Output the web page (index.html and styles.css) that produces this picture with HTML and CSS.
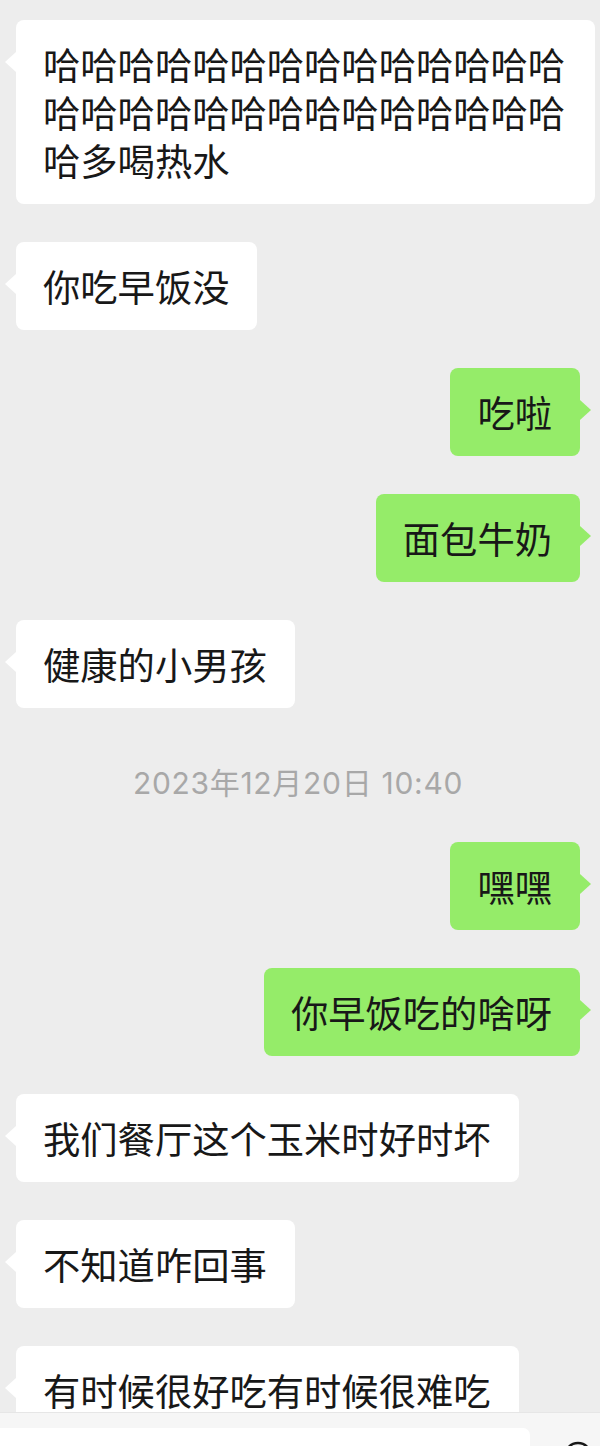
FILE: index.html
```html
<!DOCTYPE html>
<html lang="zh-CN">
<head>
  <meta charset="UTF-8">
  <meta name="viewport" content="width=device-width, initial-scale=1.0">
  <title>聊天</title>
  <link rel="stylesheet" href="styles.css">
</head>
<body>
  <div class="chat">
    <div class="row left"><div class="bubble">哈哈哈哈哈哈哈哈哈哈哈哈哈哈哈哈哈哈哈哈哈哈哈哈哈哈哈哈哈多喝热水</div></div>
    <div class="row left"><div class="bubble">你吃早饭没</div></div>
    <div class="row right"><div class="bubble">吃啦</div></div>
    <div class="row right"><div class="bubble">面包牛奶</div></div>
    <div class="row left"><div class="bubble">健康的小男孩</div></div>

    <!-- 时间 -->
    <div class="time">2023年12月20日 10:40</div>

    <div class="row right"><div class="bubble">嘿嘿</div></div>
    <div class="row right"><div class="bubble">你早饭吃的啥呀</div></div>
    <div class="row left"><div class="bubble">我们餐厅这个玉米时好时坏</div></div>
    <div class="row left"><div class="bubble">不知道咋回事</div></div>
    <div class="row left"><div class="bubble">有时候很好吃有时候很难吃</div></div>
  </div>

  <!-- 输入栏 -->
  <div class="input-bar">
    <div class="input-box"></div>
    <svg class="bar-icon" width="30" height="30" viewBox="0 0 30 30">
      <circle cx="15" cy="15" r="13" fill="none" stroke="#181818" stroke-width="2.4"/>
    </svg>
  </div>
</body>
</html>
```

FILE: styles.css
```css
body {
  margin: 0;
  padding: 0;
  background-color: #ededed;
  font-family: "Noto Sans CJK SC", "Noto Sans", sans-serif;
  color: #181818;
  overflow: hidden;
}

.chat {
  display: flex;
  flex-direction: column;
  gap: 38px;
  padding: 20px 20px 0 16px;
  height: 1446px;
  box-sizing: border-box;
}

.row {
  display: flex;
}

.row.right {
  justify-content: flex-end;
}

.bubble {
  position: relative;
  max-width: 579px;
  box-sizing: border-box;
  padding: 20px 28px 20px 27px;
  border-radius: 8px;
  background: white;
  font-size: 37.3px;
  line-height: 48px;
  word-break: break-all;
}

.row.left .bubble {
  margin-right: -15px;
}

.bubble::before {
  content: "";
  position: absolute;
  top: 32px;
  width: 0;
  height: 0;
  border-top: 10px solid transparent;
  border-bottom: 10px solid transparent;
}

.row.left .bubble::before {
  left: -11px;
  border-right: 11px solid white;
}

.row.right .bubble {
  background: #95ec69;
}

.row.right .bubble::before {
  right: -11px;
  border-left: 11px solid #95ec69;
}

.time {
  padding-top: 16px;
  text-align: center;
  font-family: Inter, "Noto Sans CJK SC", sans-serif;
  font-size: 30px;
  letter-spacing: 0.7px;
  line-height: 42px;
  color: #a8a8a8;
}

.input-bar {
  position: fixed;
  left: 0;
  right: 0;
  bottom: 0;
  height: 33px;
  background: #f6f6f6;
  border-top: 1px solid #e6e6e6;
}

.input-box {
  position: absolute;
  left: 0;
  top: 15px;
  width: 530px;
  height: 40px;
  background: white;
  border-radius: 0 7px 0 0;
}

.bar-icon {
  position: absolute;
  left: 563px;
  top: 28px;
}
```
